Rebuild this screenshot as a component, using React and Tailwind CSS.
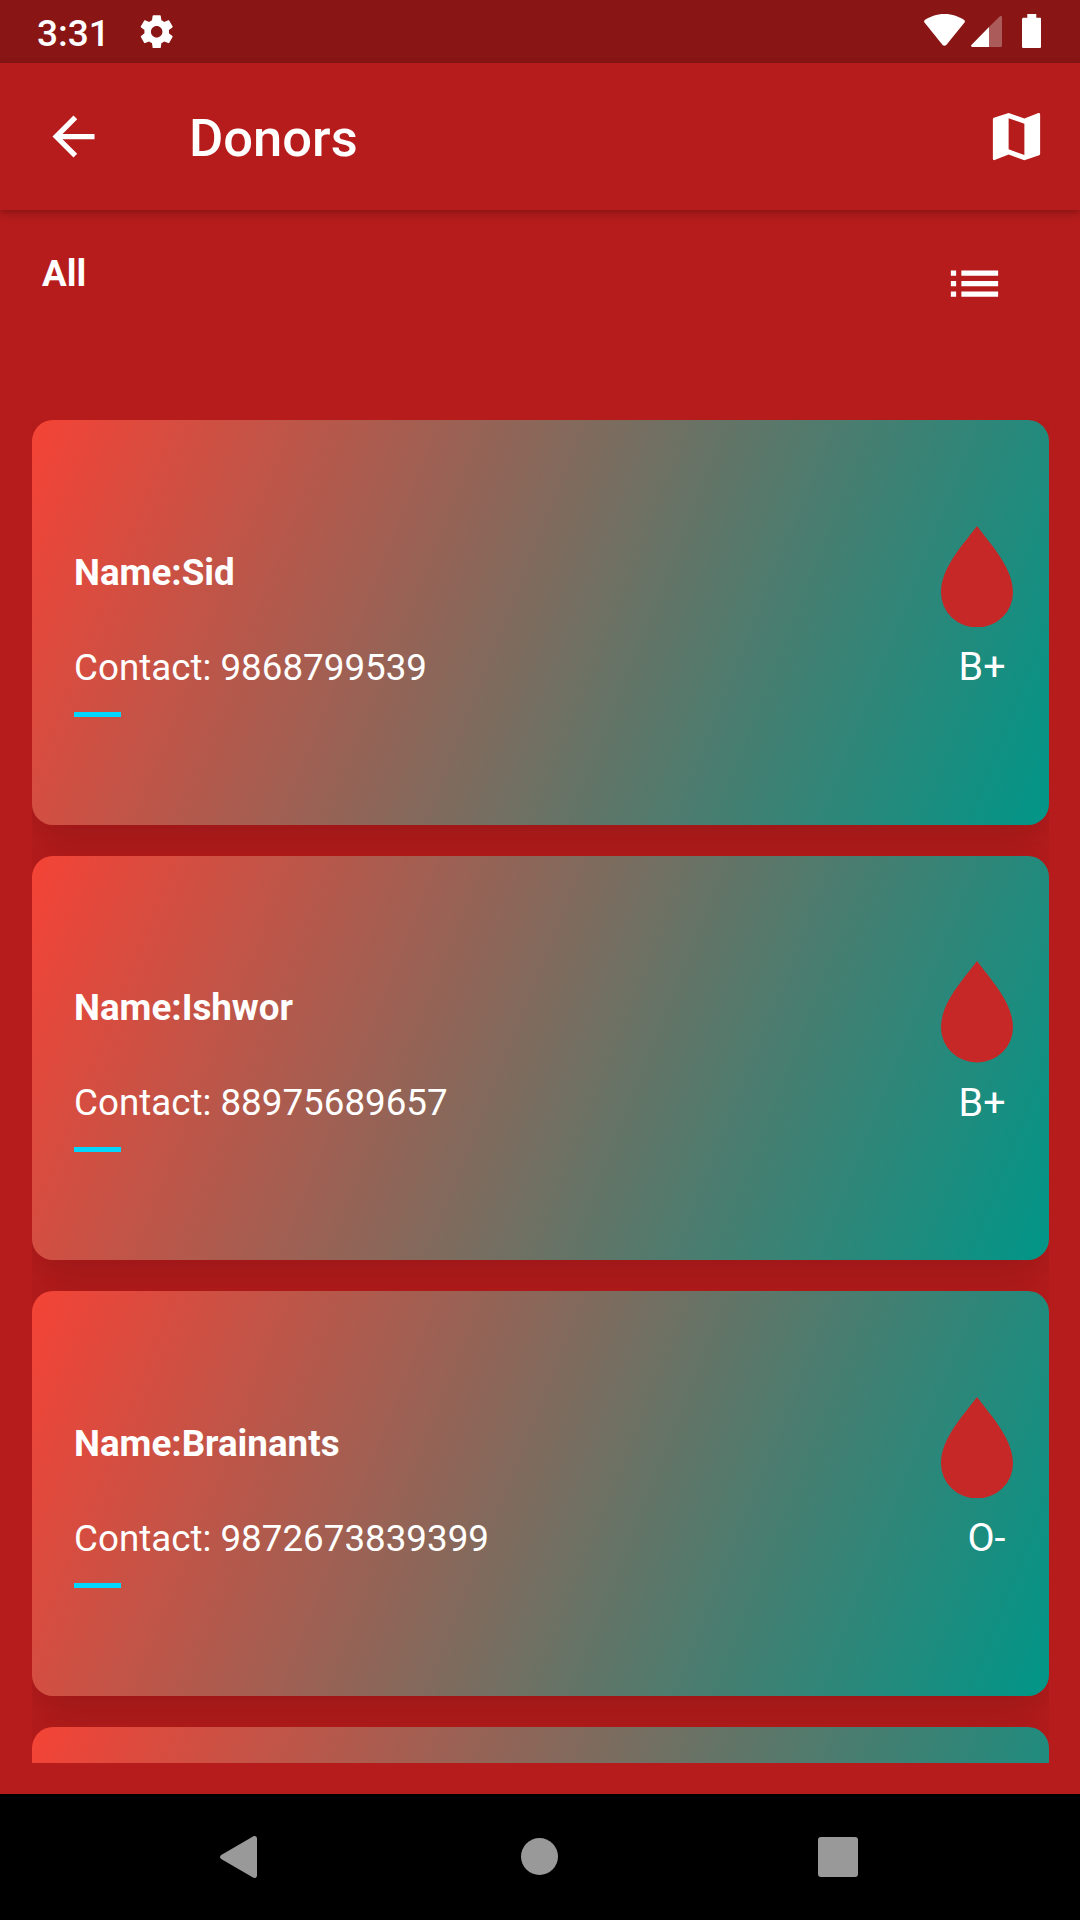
const donors = [
  { name: "Sid", contact: "9868799539", group: "B+" },
  { name: "Ishwor", contact: "88975689657", group: "B+" },
  { name: "Brainants", contact: "9872673839399", group: "O-" },
  { name: "", contact: "", group: "" },
];

function Icon({ d, className }) {
  return (
    <svg viewBox="0 0 24 24" className={className} fill="currentColor">
      <path d={d} />
    </svg>
  );
}

const GEAR =
  "M19.43 12.98c.04-.32.07-.64.07-.98s-.03-.66-.07-.98l2.11-1.65c.19-.15.24-.42.12-.64l-2-3.46c-.12-.22-.39-.3-.61-.22l-2.49 1c-.52-.4-1.08-.73-1.69-.98l-.38-2.65C14.46 2.18 14.25 2 14 2h-4c-.25 0-.46.18-.49.42l-.38 2.65c-.61.25-1.17.59-1.69.98l-2.49-1c-.23-.09-.49 0-.61.22l-2 3.46c-.13.22-.07.49.12.64l2.11 1.65c-.04.32-.07.65-.07.98s.03.66.07.98l-2.11 1.65c-.19.15-.24.42-.12.64l2 3.46c.12.22.39.3.61.22l2.49-1c.52.4 1.08.73 1.69.98l.38 2.65c.03.24.24.42.49.42h4c.25 0 .46-.18.49-.42l.38-2.65c.61-.25 1.17-.59 1.69-.98l2.49 1c.23.09.49 0 .61-.22l2-3.46c.12-.22.07-.49-.12-.64l-2.11-1.65zM12 15.5c-1.93 0-3.5-1.57-3.5-3.5s1.57-3.5 3.5-3.5 3.5 1.57 3.5 3.5-1.57 3.5-3.5 3.5z";
const BACK = "M20 11H7.83l5.59-5.59L12 4l-8 8 8 8 1.41-1.41L7.83 13H20v-2z";
const MAP =
  "M20.5 3l-.16.03L15 5.1 9 3 3.36 4.9c-.21.07-.36.25-.36.48V20.5c0 .28.22.5.5.5l.16-.03L9 18.9l6 2.1 5.64-1.9c.21-.07.36-.25.36-.48V3.5c0-.28-.22-.5-.5-.5zM15 19l-6-2.11V5l6 2.11V19z";
const LIST =
  "M3 13h2v-2H3v2zm0 4h2v-2H3v2zm0-8h2V7H3v2zm4 4h14v-2H7v2zm0 4h14v-2H7v2zM7 7v2h14V7H7z";

function StatusBar() {
  return (
    <div className="flex h-[63px] shrink-0 items-center bg-[#891515] pl-[37px] pr-[39px]">
      <span className="mt-[4px] w-[100.4px] text-[37px] font-medium leading-[44px]">3:31</span>
      <Icon d={GEAR} className="size-[39.4px]" />
      <div className="ml-auto flex h-full items-start">
        <svg className="mt-[14px] h-[32px] w-[41px]" viewBox="0 0 41 32" fill="currentColor">
          <path d="M20.5 0C12.6 0 5.6 2.6.8 6.1c-.8.7-.9 1.5-.3 2.3L18.6 31c1 1.1 2.7 1.1 3.7 0L40.5 8.4c.6-.8.5-1.6-.3-2.3C35.4 2.6 28.4 0 20.5 0z" />
        </svg>
        <svg className="ml-[6px] mt-[16px] h-[31px] w-[31px]" viewBox="0 0 31 31" fill="currentColor">
          <path d="M18 31H1.2C.2 31-.3 29.8.4 29L18 11z" />
          <path d="M18 11 28.9.3C29.7-.3 31 .1 31 1.3V29.5c0 .9-.6 1.5-1.5 1.5H18z" opacity="0.3" />
        </svg>
        <svg className="ml-[19.5px] mt-[14px] h-[34px] w-[19.5px]" viewBox="0 0 19.5 34" fill="currentColor">
          <path d="M5.3 0h9v3.7h3.6c.9 0 1.6.7 1.6 1.6v27.1c0 .9-.7 1.6-1.6 1.6H1.6C.7 34 0 33.3 0 32.4V5.3c0-.9.7-1.6 1.6-1.6h3.7z" />
        </svg>
      </div>
    </div>
  );
}

function DonorCard({ donor }) {
  return (
    <article className="flex h-[404.3px] shrink-0 justify-between rounded-[21px] bg-[linear-gradient(111.7deg,#f44336,#009688)] pl-[42px] pr-[36.5px] shadow-[0_20px_42px_rgba(0,0,0,0.14)]">
      {donor.name && (
        <>
          <div className="pt-[130.3px]">
            <h2 className="text-[36.75px] font-bold leading-[44px]">Name:{donor.name}</h2>
            <p className="mt-[51px] text-[36.75px] leading-[44px]">Contact: {donor.contact}</p>
            <div className="mt-[22px] h-[5.25px] w-[47.25px] bg-[#00d6ff]" />
          </div>
          <div className="flex flex-col items-end pt-[105.5px]">
            <svg className="h-[101.5px] w-[72px]" viewBox="0 0 72 101.5">
              <path d="M36 0C51 20 72 42 72 66.5a36 35 0 0 1-72 0C0 42 21 20 36 0z" fill="#c62828" />
            </svg>
            <span className="mr-[7px] mt-[16.7px] text-[39.4px] leading-[46px]">{donor.group}</span>
          </div>
        </>
      )}
    </article>
  );
}

export default function App() {
  return (
    <div className="flex h-[1920px] w-[1080px] flex-col overflow-hidden bg-[#b71c1c] font-['Roboto',sans-serif] text-white">
      <StatusBar />
      <header className="z-10 flex h-[147px] shrink-0 items-center bg-[#b71c1c] pl-[42px] pr-[32px] shadow-[0_4px_10px_rgba(0,0,0,0.2),0_2px_4px_rgba(0,0,0,0.08)]">
        <Icon d={BACK} className="size-[63px]" />
        <h1 className="ml-[84px] mt-[2px] text-[52.5px] font-medium leading-[62px]">Donors</h1>
        <Icon d={MAP} className="ml-auto size-[63px]" />
      </header>
      <div className="flex h-[210.3px] shrink-0 justify-between pl-[42px] pr-[74px] pt-[42px]">
        <span className="text-[36.75px] font-bold leading-[44px]">All</span>
        <Icon d={LIST} className="size-[63px]" />
      </div>
      <main className="ml-[32px] mr-[31px] flex h-[1342.7px] shrink-0 flex-col gap-[31.3px] overflow-hidden">
        {donors.map((d, i) => (
          <DonorCard key={i} donor={d} />
        ))}
      </main>
      <nav className="mt-auto flex h-[126px] shrink-0 items-center bg-black pb-px pl-[220px] text-[#999]">
        <svg className="h-[42px] w-[37px]" viewBox="0 0 37 42" fill="currentColor">
          <path d="M1.2 19 33 .4c2-1 4 .1 4 2.2v36.8c0 2.1-2 3.2-4 2.2L1.2 23c-1.6-1-1.6-3 0-4z" />
        </svg>
        <div className="ml-[264px] size-[37px] rounded-full bg-[#999]" />
        <div className="ml-[260px] size-[40px] rounded-[3px] bg-[#999]" />
      </nav>
    </div>
  );
}
